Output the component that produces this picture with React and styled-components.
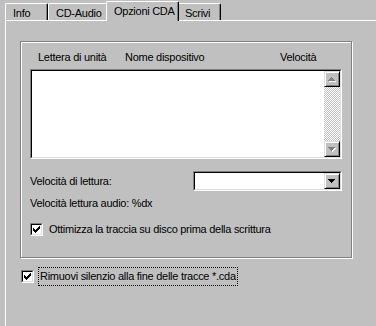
import React from 'react';
import styled, { createGlobalStyle } from 'styled-components';

const Global = createGlobalStyle`
  html, body { margin: 0; padding: 0; background: #c0c0c0; }
  body {
    font-family: "Liberation Sans", Arial, sans-serif;
    font-size: 11px;
    letter-spacing: -0.27px;
    color: #000;
  }
  * { box-sizing: border-box; }
`;

const Window = styled.div`
  width: 376px;
  height: 326px;
  overflow: hidden;
  background: #c0c0c0;
`;

const TabStrip = styled.div`
  display: flex;
  align-items: flex-end;
  height: 20px;
  padding-left: 5px;
  position: relative;
  z-index: 1;
`;

const Tab = styled.div`
  width: ${p => p.$w}px;
  height: ${p => (p.$active ? 20 : 17)}px;
  margin: 0 ${p => (p.$active ? -2 : 0)}px ${p => (p.$active ? -1 : 0)}px;
  padding: ${p => (p.$active ? '0 0 2px 7px' : '1px 0 0 7px')};
  display: flex;
  align-items: center;
  white-space: nowrap;
  background: #c0c0c0;
  border-top: 1px solid #fff;
  border-left: 1px solid #fff;
  border-right: 1px solid #000;
  border-top-left-radius: 2px;
  border-top-right-radius: 2px;
  box-shadow: inset -1px 0 #808080;
  position: relative;
  z-index: ${p => (p.$active ? 2 : 1)};
`;

const Page = styled.div`
  margin-left: 5px;
  width: 420px;
  height: 320px;
  border-top: 1px solid #fff;
  border-left: 1px solid #fff;
  padding: 20px 0 0 14px;
`;

const Group = styled.div`
  width: 332px;
  height: 217px;
  border: 1px solid #808080;
  box-shadow: inset 1px 1px #fff, 1px 1px #fff;
  padding: 8px 0 0 9px;
  display: flex;
  flex-direction: column;
`;

const HeaderRow = styled.div`
  display: flex;
  height: 14px;
  align-items: center;
  padding-left: 8px;
  margin-bottom: 5px;
`;

const HeaderCell = styled.div`
  width: ${p => (p.$w ? `${p.$w}px` : 'auto')};
  white-space: nowrap;
`;

const SunkenOuter = styled.div`
  width: ${p => p.$w}px;
  height: ${p => p.$h}px;
  border-style: solid;
  border-width: 1px;
  border-color: #808080 #fff #fff #808080;
  flex: none;
`;

const SunkenInner = styled.div`
  width: 100%;
  height: 100%;
  border-style: solid;
  border-width: 1px;
  border-color: #000 #dfdfdf #dfdfdf #000;
  background: #fff;
  display: flex;
  justify-content: flex-end;
`;

const ScrollBar = styled.div`
  width: 16px;
  height: 100%;
  display: flex;
  flex-direction: column;
`;

const Track = styled.div`
  flex: 1;
  background-image: conic-gradient(#fff 25%, #c0c0c0 0 50%, #fff 0 75%, #c0c0c0 0);
  background-size: 2px 2px;
`;

const RaisedButton = styled.div`
  width: 16px;
  height: ${p => p.$h || 16}px;
  flex: none;
  background: #c0c0c0;
  border-style: solid;
  border-width: 1px;
  border-color: #dfdfdf #000 #000 #dfdfdf;
  box-shadow: inset 1px 1px #fff, inset -1px -1px #808080;
  display: flex;
  align-items: center;
  justify-content: center;
  svg { display: block; }
`;

const FieldRow = styled.div`
  display: flex;
  align-items: center;
  justify-content: space-between;
  width: 312px;
  margin-top: ${p => p.$mt}px;
`;

const Label = styled.div`
  white-space: nowrap;
  margin-top: ${p => p.$mt || 0}px;
  line-height: 14px;
`;

const CheckRow = styled.label`
  display: flex;
  align-items: center;
  margin-top: ${p => p.$mt}px;
  margin-left: ${p => p.$ml || 0}px;
  white-space: nowrap;
`;

const CheckText = styled.span`
  margin-left: ${p => p.$gap}px;
  padding: 2px 1px 3px;
  line-height: 12px;
  border: 1px ${p => (p.$focus ? 'dotted #000' : 'solid transparent')};
`;

const Box = styled.span`
  width: 13px;
  height: 13px;
  flex: none;
  border-style: solid;
  border-width: 1px;
  border-color: #808080 #fff #fff #808080;
  display: block;
`;

const BoxInner = styled.span`
  display: flex;
  width: 100%;
  height: 100%;
  border-style: solid;
  border-width: 1px;
  border-color: #000 #dfdfdf #dfdfdf #000;
  background: #fff;
  padding: 1px;
  svg { display: block; }
`;

const UpArrow = () => (
  <svg width="8" height="5" viewBox="0 0 8 5" shapeRendering="crispEdges">
    <path fill="#fff" d="M4 1h1v1h-1z M3 2h3v1h-3z M2 3h5v1h-5z M1 4h7v1h-7z" />
    <path fill="#808080" d="M3 0h1v1h-1z M2 1h3v1h-3z M1 2h5v1h-5z M0 3h7v1h-7z" />
  </svg>
);

const DownArrow = ({ color = '#808080', shadow = true }) => (
  <svg width="8" height="5" viewBox="0 0 8 5" shapeRendering="crispEdges">
    {shadow && <path fill="#fff" d="M1 1h7v1h-7z M2 2h5v1h-5z M3 3h3v1h-3z M4 4h1v1h-1z" />}
    <path fill={color} d="M0 0h7v1h-7z M1 1h5v1h-5z M2 2h3v1h-3z M3 3h1v1h-1z" />
  </svg>
);

const CheckMark = () => (
  <svg width="7" height="7" viewBox="0 0 7 7" shapeRendering="crispEdges">
    <path
      fill="#000"
      d="M6 0h1v1h-1z M5 1h2v1h-2z M0 2h1v1h-1z M4 2h3v1h-3z M0 3h2v1h-2z M3 3h3v1h-3z M0 4h5v1h-5z M1 5h3v1h-3z M2 6h1v1h-1z"
    />
  </svg>
);

const Checkbox = () => (
  <Box>
    <BoxInner>
      <CheckMark />
    </BoxInner>
  </Box>
);

export default function App() {
  return (
    <Window>
      <Global />
      <TabStrip>
        <Tab $w={43}>Info</Tab>
        <Tab $w={60}>CD-Audio</Tab>
        <Tab $w={73} $active>Opzioni CDA</Tab>
        <Tab $w={44}>Scrivi</Tab>
      </TabStrip>
      <Page>
        <Group>
          <HeaderRow>
            <HeaderCell $w={87}>Lettera di unità</HeaderCell>
            <HeaderCell $w={155}>Nome dispositivo</HeaderCell>
            <HeaderCell>Velocità</HeaderCell>
          </HeaderRow>
          <SunkenOuter $w={312} $h={90}>
            <SunkenInner>
              <ScrollBar>
                <RaisedButton><UpArrow /></RaisedButton>
                <Track />
                <RaisedButton><DownArrow /></RaisedButton>
              </ScrollBar>
            </SunkenInner>
          </SunkenOuter>
          <FieldRow $mt={12}>
            <Label>Velocità di lettura:</Label>
            <SunkenOuter $w={149} $h={20}>
              <SunkenInner>
                <RaisedButton><DownArrow color="#000" shadow={false} /></RaisedButton>
              </SunkenInner>
            </SunkenOuter>
          </FieldRow>
          <Label $mt={5}>Velocità lettura audio: %dx</Label>
          <CheckRow $mt={10}>
            <Checkbox />
            <CheckText $gap={4}>Ottimizza la traccia su disco prima della scrittura</CheckText>
          </CheckRow>
        </Group>
        <CheckRow $mt={9} $ml={1}>
          <Checkbox />
          <CheckText $gap={4} $focus>Rimuovi silenzio alla fine delle tracce *.cda</CheckText>
        </CheckRow>
      </Page>
    </Window>
  );
}
